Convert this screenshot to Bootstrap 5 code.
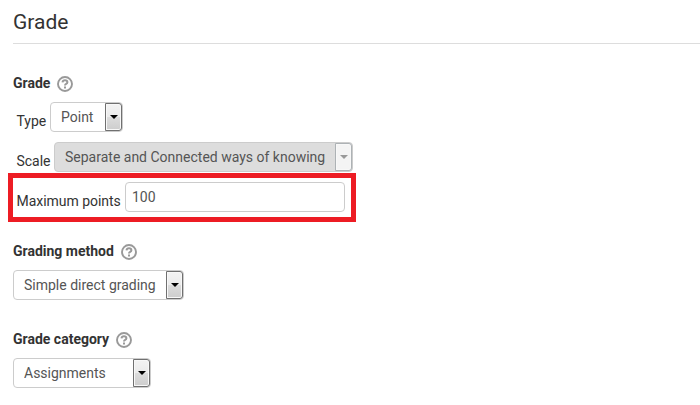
<!DOCTYPE html>
<html lang="en">
<head>
<meta charset="utf-8">
<meta name="viewport" content="width=device-width, initial-scale=1">
<title>Grade</title>
<link href="https://cdn.jsdelivr.net/npm/bootstrap@5.3.0/dist/css/bootstrap.min.css" rel="stylesheet">
<style>
body { font-family: Roboto, "Liberation Sans", sans-serif; font-size: 14px; line-height: 20px; color: #333; background: #fff; overflow: hidden; }
.settings { padding-left: 13px; }
.section-title { font-size: 21px; line-height: 42px; height: 44px; border-bottom: 1px solid #ddd; padding-top: 1px; font-weight: 400; }
.group { margin-top: 29px; }
.group-grading { margin-top: 19px; }
.group-title { font-weight: 700; height: 20px; gap: 7px; margin-bottom: 9px; }
.help { width: 16px; height: 16px; margin-top: 1px; }
.line { height: 30px; padding-left: 3.5px; }
.line + .line { margin-top: 10px; }
.line > label, .callout-box label { padding-top: 9px; letter-spacing: -.03px; }
.picker { height: 30px; border: 1px solid #ccc; border-radius: 4px; background: #fff; }
.picker select { appearance: none; flex: 1; min-width: 0; border: 0; outline: 0; background: transparent; color: #555; font-size: 14px; line-height: 20px; padding: 0 0 0 10px; opacity: 1; }
.arrow { width: 17px; border: 1px solid #707070; border-radius: 0 3px 3px 0; background: linear-gradient(#f3f3f3 0%, #ebebeb 50%, #dcdcdc 51%, #cdcdcd 100%); box-shadow: inset 0 0 0 1px #f8f8f8; }
.arrow svg { width: 8px; height: 4px; color: #000; }
.picker.locked { background: #ddd; }
.picker.locked .arrow { border-color: #adb2b5; background: #f4f4f4; }
.picker.locked svg { color: #999; }
.w-type { width: 73px; } .w-scale { width: 299px; } .w-method { width: 171px; } .w-category { width: 138px; }
.label-type { width: 33.5px; } .label-scale { width: 37.5px; } .label-points { width: 108.5px; }
.callout-box { width: 348px; height: 49px; margin: 1px 0 0 -5px; border: 5px solid #ed1c24; padding: 4px 0 0 3.5px; }
.points { width: 220px; height: 30px; padding: 4px 6px; font-size: 14px; line-height: 20px; color: #555; border: 1px solid #ccc; border-radius: 4px; }
</style>
<script src="https://cdn.jsdelivr.net/npm/bootstrap@5.3.0/dist/js/bootstrap.bundle.min.js"></script>
</head>
<body>
<svg class="d-none">
  <symbol id="help" viewBox="0 0 16 16"><circle cx="8" cy="8" r="7" fill="none" stroke="#999" stroke-width="1.9"/><path d="M5.5 6.4Q5.7 4.3 8 4.3T10.4 6.2Q10.4 7.2 9.2 7.8Q8 8.4 8 9.4" fill="none" stroke="#999" stroke-width="2"/><path d="M7 10.5h2v2H7z" fill="#999"/></symbol>
  <symbol id="caret" viewBox="0 0 8 4"><path d="M0 0h8L4 4z" fill="currentColor"/></symbol>
</svg>
<main class="settings">
  <h1 class="section-title mb-0">Grade</h1>

  <section class="group">
    <div class="group-title d-flex align-items-center"><span>Grade</span><svg class="help"><use href="#help"/></svg></div>
    <div class="line d-flex">
      <label for="type" class="label-type">Type</label>
      <div class="picker w-type d-flex"><select id="type"><option>Point</option></select><span class="arrow d-flex align-items-center justify-content-center"><svg><use href="#caret"/></svg></span></div>
    </div>
    <div class="line d-flex">
      <label for="scale" class="label-scale">Scale</label>
      <div class="picker locked w-scale d-flex"><select id="scale" disabled><option>Separate and Connected ways of knowing</option></select><span class="arrow d-flex align-items-center justify-content-center"><svg><use href="#caret"/></svg></span></div>
    </div>
    <div class="callout-box d-flex">
      <label for="points" class="label-points">Maximum points</label>
      <input id="points" class="points" type="text" value="100">
    </div>
  </section>

  <section class="group-grading">
    <div class="group-title d-flex align-items-center"><span>Grading method</span><svg class="help"><use href="#help"/></svg></div>
    <div class="picker w-method d-flex"><select aria-label="Grading method"><option>Simple direct grading</option></select><span class="arrow d-flex align-items-center justify-content-center"><svg><use href="#caret"/></svg></span></div>
  </section>

  <section class="group">
    <div class="group-title d-flex align-items-center"><span>Grade category</span><svg class="help"><use href="#help"/></svg></div>
    <div class="picker w-category d-flex"><select aria-label="Grade category"><option>Assignments</option></select><span class="arrow d-flex align-items-center justify-content-center"><svg><use href="#caret"/></svg></span></div>
  </section>
</main>
</body>
</html>
